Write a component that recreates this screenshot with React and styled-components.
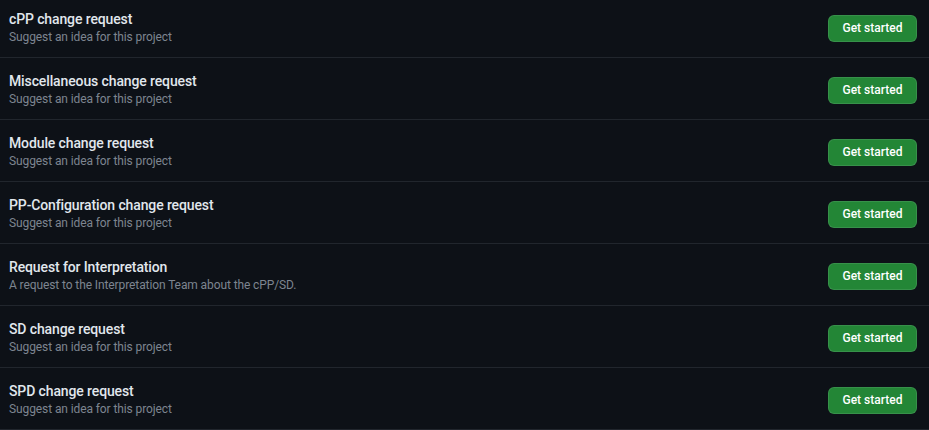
import React from "react";
import styled, { createGlobalStyle } from "styled-components";

const Global = createGlobalStyle`
  html, body { margin: 0; padding: 0; background: #0d1117; }
  body { font-family: Roboto, "Noto Sans", "Liberation Sans", sans-serif; color: #e6edf3; overflow: hidden; }
`;

const List = styled.div`
  display: flex;
  flex-direction: column;
  margin-top: -4px;
`;

const Row = styled.div`
  display: flex;
  align-items: center;
  height: 61px;
  padding: 0 12px 0 9px;
  border-bottom: 1px solid #21262d;
`;

const Info = styled.div`
  flex: 1;
  display: flex;
  flex-direction: column;
`;

const Title = styled.strong`
  font-size: 14px;
  font-weight: 500;
  line-height: 20px;
  letter-spacing: -0.12px;
  color: #e1e7ed;
`;

const Desc = styled.span`
  font-size: 12px;
  line-height: 16px;
  letter-spacing: -0.1px;
  color: #7d8590;
`;

const Button = styled.a`
  display: inline-flex;
  align-items: center;
  justify-content: center;
  box-sizing: border-box;
  width: 89px;
  height: 27px;
  margin-top: 3px;
  border-radius: 6px;
  background: #238636;
  border: 1px solid rgba(240, 246, 252, 0.1);
  color: #ffffff;
  font-size: 12px;
  font-weight: 500;
  text-decoration: none;
`;

const items = [
  ["cPP change request", "Suggest an idea for this project"],
  ["Miscellaneous change request", "Suggest an idea for this project"],
  ["Module change request", "Suggest an idea for this project"],
  ["PP-Configuration change request", "Suggest an idea for this project"],
  ["Request for Interpretation", "A request to the Interpretation Team about the cPP/SD."],
  ["SD change request", "Suggest an idea for this project"],
  ["SPD change request", "Suggest an idea for this project"],
];

export default function App() {
  return (
    <>
      <Global />
      <List>
        {items.map(([t, d]) => (
          <Row key={t}>
            <Info>
              <Title>{t}</Title>
              <Desc>{d}</Desc>
            </Info>
            <Button href="#">Get started</Button>
          </Row>
        ))}
      </List>
    </>
  );
}
